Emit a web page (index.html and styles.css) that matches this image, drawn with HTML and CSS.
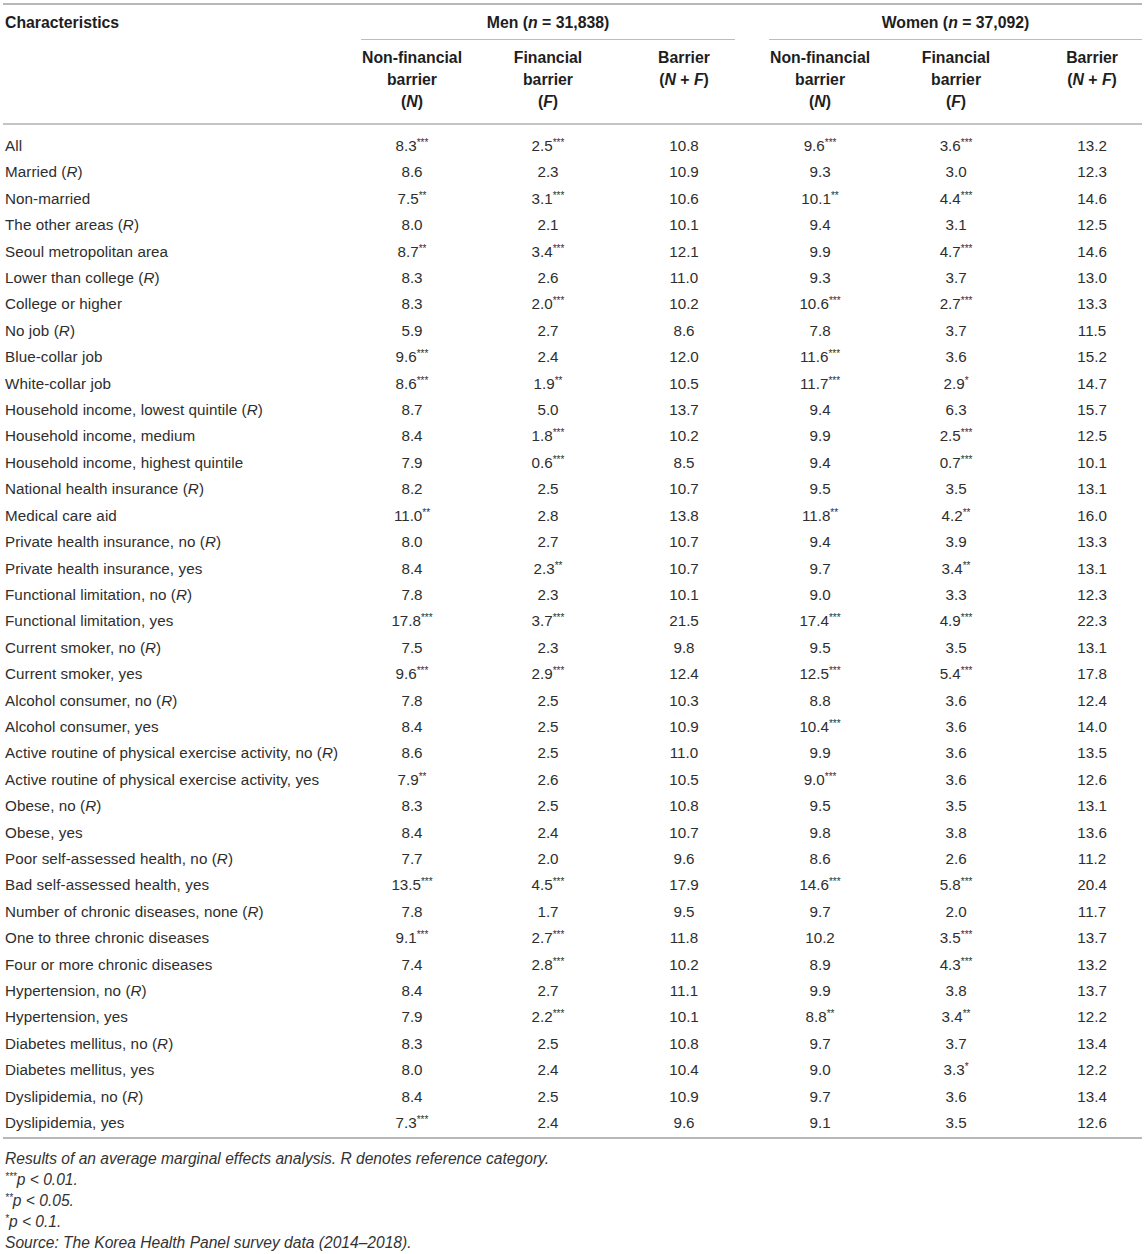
FILE: index.html
```html
<!DOCTYPE html>
<html>
<head>
<meta charset="utf-8">
<link rel="stylesheet" href="styles.css">
</head>
<body>
<div class="wrap">
<table class="tbl">
  <colgroup>
    <col class="c-label"><col class="c-num"><col class="c-num"><col class="c-num"><col class="c-num"><col class="c-num"><col class="c-last">
  </colgroup>
  <thead>
    <tr class="h1">
      <th class="lbl">Characteristics</th>
      <th colspan="3" class="grp"><div class="grp-in men">Men (<i>n</i> = 31,838)</div></th>
      <th colspan="3" class="grp"><div class="grp-in women">Women (<i>n</i> = 37,092)</div></th>
    </tr>
    <tr class="h2">
      <th></th>
      <th>Non-financial<br>barrier<br>(<i>N</i>)</th>
      <th>Financial<br>barrier<br>(<i>F</i>)</th>
      <th>Barrier<br>(<i>N</i> + <i>F</i>)</th>
      <th>Non-financial<br>barrier<br>(<i>N</i>)</th>
      <th>Financial<br>barrier<br>(<i>F</i>)</th>
      <th class="last">Barrier<br>(<i>N</i> + <i>F</i>)</th>
    </tr>
  </thead>
  <tbody>
    <tr><td>All</td><td>8.3<sup>***</sup></td><td>2.5<sup>***</sup></td><td>10.8</td><td>9.6<sup>***</sup></td><td>3.6<sup>***</sup></td><td class="last">13.2</td></tr>
    <tr><td>Married (<i>R</i>)</td><td>8.6</td><td>2.3</td><td>10.9</td><td>9.3</td><td>3.0</td><td class="last">12.3</td></tr>
    <tr><td>Non-married</td><td>7.5<sup>**</sup></td><td>3.1<sup>***</sup></td><td>10.6</td><td>10.1<sup>**</sup></td><td>4.4<sup>***</sup></td><td class="last">14.6</td></tr>
    <tr><td>The other areas (<i>R</i>)</td><td>8.0</td><td>2.1</td><td>10.1</td><td>9.4</td><td>3.1</td><td class="last">12.5</td></tr>
    <tr><td>Seoul metropolitan area</td><td>8.7<sup>**</sup></td><td>3.4<sup>***</sup></td><td>12.1</td><td>9.9</td><td>4.7<sup>***</sup></td><td class="last">14.6</td></tr>
    <tr><td>Lower than college (<i>R</i>)</td><td>8.3</td><td>2.6</td><td>11.0</td><td>9.3</td><td>3.7</td><td class="last">13.0</td></tr>
    <tr><td>College or higher</td><td>8.3</td><td>2.0<sup>***</sup></td><td>10.2</td><td>10.6<sup>***</sup></td><td>2.7<sup>***</sup></td><td class="last">13.3</td></tr>
    <tr><td>No job (<i>R</i>)</td><td>5.9</td><td>2.7</td><td>8.6</td><td>7.8</td><td>3.7</td><td class="last">11.5</td></tr>
    <tr><td>Blue-collar job</td><td>9.6<sup>***</sup></td><td>2.4</td><td>12.0</td><td>11.6<sup>***</sup></td><td>3.6</td><td class="last">15.2</td></tr>
    <tr><td>White-collar job</td><td>8.6<sup>***</sup></td><td>1.9<sup>**</sup></td><td>10.5</td><td>11.7<sup>***</sup></td><td>2.9<sup>*</sup></td><td class="last">14.7</td></tr>
    <tr><td>Household income, lowest quintile (<i>R</i>)</td><td>8.7</td><td>5.0</td><td>13.7</td><td>9.4</td><td>6.3</td><td class="last">15.7</td></tr>
    <tr><td>Household income, medium</td><td>8.4</td><td>1.8<sup>***</sup></td><td>10.2</td><td>9.9</td><td>2.5<sup>***</sup></td><td class="last">12.5</td></tr>
    <tr><td>Household income, highest quintile</td><td>7.9</td><td>0.6<sup>***</sup></td><td>8.5</td><td>9.4</td><td>0.7<sup>***</sup></td><td class="last">10.1</td></tr>
    <tr><td>National health insurance (<i>R</i>)</td><td>8.2</td><td>2.5</td><td>10.7</td><td>9.5</td><td>3.5</td><td class="last">13.1</td></tr>
    <tr><td>Medical care aid</td><td>11.0<sup>**</sup></td><td>2.8</td><td>13.8</td><td>11.8<sup>**</sup></td><td>4.2<sup>**</sup></td><td class="last">16.0</td></tr>
    <tr><td>Private health insurance, no (<i>R</i>)</td><td>8.0</td><td>2.7</td><td>10.7</td><td>9.4</td><td>3.9</td><td class="last">13.3</td></tr>
    <tr><td>Private health insurance, yes</td><td>8.4</td><td>2.3<sup>**</sup></td><td>10.7</td><td>9.7</td><td>3.4<sup>**</sup></td><td class="last">13.1</td></tr>
    <tr><td>Functional limitation, no (<i>R</i>)</td><td>7.8</td><td>2.3</td><td>10.1</td><td>9.0</td><td>3.3</td><td class="last">12.3</td></tr>
    <tr><td>Functional limitation, yes</td><td>17.8<sup>***</sup></td><td>3.7<sup>***</sup></td><td>21.5</td><td>17.4<sup>***</sup></td><td>4.9<sup>***</sup></td><td class="last">22.3</td></tr>
    <tr><td>Current smoker, no (<i>R</i>)</td><td>7.5</td><td>2.3</td><td>9.8</td><td>9.5</td><td>3.5</td><td class="last">13.1</td></tr>
    <tr><td>Current smoker, yes</td><td>9.6<sup>***</sup></td><td>2.9<sup>***</sup></td><td>12.4</td><td>12.5<sup>***</sup></td><td>5.4<sup>***</sup></td><td class="last">17.8</td></tr>
    <tr><td>Alcohol consumer, no (<i>R</i>)</td><td>7.8</td><td>2.5</td><td>10.3</td><td>8.8</td><td>3.6</td><td class="last">12.4</td></tr>
    <tr><td>Alcohol consumer, yes</td><td>8.4</td><td>2.5</td><td>10.9</td><td>10.4<sup>***</sup></td><td>3.6</td><td class="last">14.0</td></tr>
    <tr><td>Active routine of physical exercise activity, no (<i>R</i>)</td><td>8.6</td><td>2.5</td><td>11.0</td><td>9.9</td><td>3.6</td><td class="last">13.5</td></tr>
    <tr><td>Active routine of physical exercise activity, yes</td><td>7.9<sup>**</sup></td><td>2.6</td><td>10.5</td><td>9.0<sup>***</sup></td><td>3.6</td><td class="last">12.6</td></tr>
    <tr><td>Obese, no (<i>R</i>)</td><td>8.3</td><td>2.5</td><td>10.8</td><td>9.5</td><td>3.5</td><td class="last">13.1</td></tr>
    <tr><td>Obese, yes</td><td>8.4</td><td>2.4</td><td>10.7</td><td>9.8</td><td>3.8</td><td class="last">13.6</td></tr>
    <tr><td>Poor self-assessed health, no (<i>R</i>)</td><td>7.7</td><td>2.0</td><td>9.6</td><td>8.6</td><td>2.6</td><td class="last">11.2</td></tr>
    <tr><td>Bad self-assessed health, yes</td><td>13.5<sup>***</sup></td><td>4.5<sup>***</sup></td><td>17.9</td><td>14.6<sup>***</sup></td><td>5.8<sup>***</sup></td><td class="last">20.4</td></tr>
    <tr><td>Number of chronic diseases, none (<i>R</i>)</td><td>7.8</td><td>1.7</td><td>9.5</td><td>9.7</td><td>2.0</td><td class="last">11.7</td></tr>
    <tr><td>One to three chronic diseases</td><td>9.1<sup>***</sup></td><td>2.7<sup>***</sup></td><td>11.8</td><td>10.2</td><td>3.5<sup>***</sup></td><td class="last">13.7</td></tr>
    <tr><td>Four or more chronic diseases</td><td>7.4</td><td>2.8<sup>***</sup></td><td>10.2</td><td>8.9</td><td>4.3<sup>***</sup></td><td class="last">13.2</td></tr>
    <tr><td>Hypertension, no (<i>R</i>)</td><td>8.4</td><td>2.7</td><td>11.1</td><td>9.9</td><td>3.8</td><td class="last">13.7</td></tr>
    <tr><td>Hypertension, yes</td><td>7.9</td><td>2.2<sup>***</sup></td><td>10.1</td><td>8.8<sup>**</sup></td><td>3.4<sup>**</sup></td><td class="last">12.2</td></tr>
    <tr><td>Diabetes mellitus, no (<i>R</i>)</td><td>8.3</td><td>2.5</td><td>10.8</td><td>9.7</td><td>3.7</td><td class="last">13.4</td></tr>
    <tr><td>Diabetes mellitus, yes</td><td>8.0</td><td>2.4</td><td>10.4</td><td>9.0</td><td>3.3<sup>*</sup></td><td class="last">12.2</td></tr>
    <tr><td>Dyslipidemia, no (<i>R</i>)</td><td>8.4</td><td>2.5</td><td>10.9</td><td>9.7</td><td>3.6</td><td class="last">13.4</td></tr>
    <tr><td>Dyslipidemia, yes</td><td>7.3<sup>***</sup></td><td>2.4</td><td>9.6</td><td>9.1</td><td>3.5</td><td class="last">12.6</td></tr>
  </tbody>
</table>
<div class="notes">
  <p>Results of an average marginal effects analysis. R denotes reference category.</p>
  <p><sup>***</sup>p &lt; 0.01.</p>
  <p><sup>**</sup>p &lt; 0.05.</p>
  <p><sup>*</sup>p &lt; 0.1.</p>
  <p>Source: The Korea Health Panel survey data (2014–2018).</p>
</div>
</div>
</body>
</html>
```
FILE: styles.css
```css
html, body {
  margin: 0;
  padding: 0;
  background: #ffffff;
}
body {
  font-family: "Liberation Sans", Arial, sans-serif;
  color: #2e2e2e;
}
.wrap {
  padding: 3px 0 0 3px;
}
.tbl {
  border-collapse: collapse;
  table-layout: fixed;
  width: 1139px;
  font-size: 15.2px;
  border-top: 2px solid #b8b8b8;
  border-bottom: 2px solid #b8b8b8;
}
.c-label { width: 341px; }
.c-num { width: 136px; }
.c-last { width: 118px; }

.tbl th {
  font-size: 15.8px;
  font-weight: bold;
  color: #1e1e1e;
  line-height: 22px;
  text-align: center;
  vertical-align: top;
  padding: 0;
}
.h1 th {
  padding-top: 7px;
}
.h1 th.lbl {
  text-align: left;
  padding-left: 2px;
  padding-bottom: 6px;
}
.grp-in {
  border-bottom: 1px solid #bdbdbd;
  padding-bottom: 5px;
}
.grp-in.men {
  margin: 0 17px;
}
.grp-in.women {
  margin: 0 0 0 17px;
}
.h2 th {
  padding-top: 7px;
  padding-bottom: 10px;
  border-bottom: 2px solid #c4c4c4;
}
.tbl th.last,
.tbl td.last {
  padding-left: 18px;
}
.tbl td {
  padding: 0;
  line-height: 26.4px;
  text-align: center;
  white-space: nowrap;
}
.tbl td:first-child {
  text-align: left;
  padding-left: 2px;
  letter-spacing: 0.08px;
}
.tbl tbody tr:first-child td {
  padding-top: 8px;
}
.tbl tbody tr:last-child td {
  padding-bottom: 1px;
}
.tbl sup,
.notes sup {
  font-size: 10px;
  line-height: 0;
  vertical-align: 5px;
}
.notes {
  padding-top: 9px;
  padding-left: 2px;
  font-size: 15.6px;
  font-style: italic;
  color: #333333;
}
.notes p {
  margin: 0;
  line-height: 21px;
}
```
